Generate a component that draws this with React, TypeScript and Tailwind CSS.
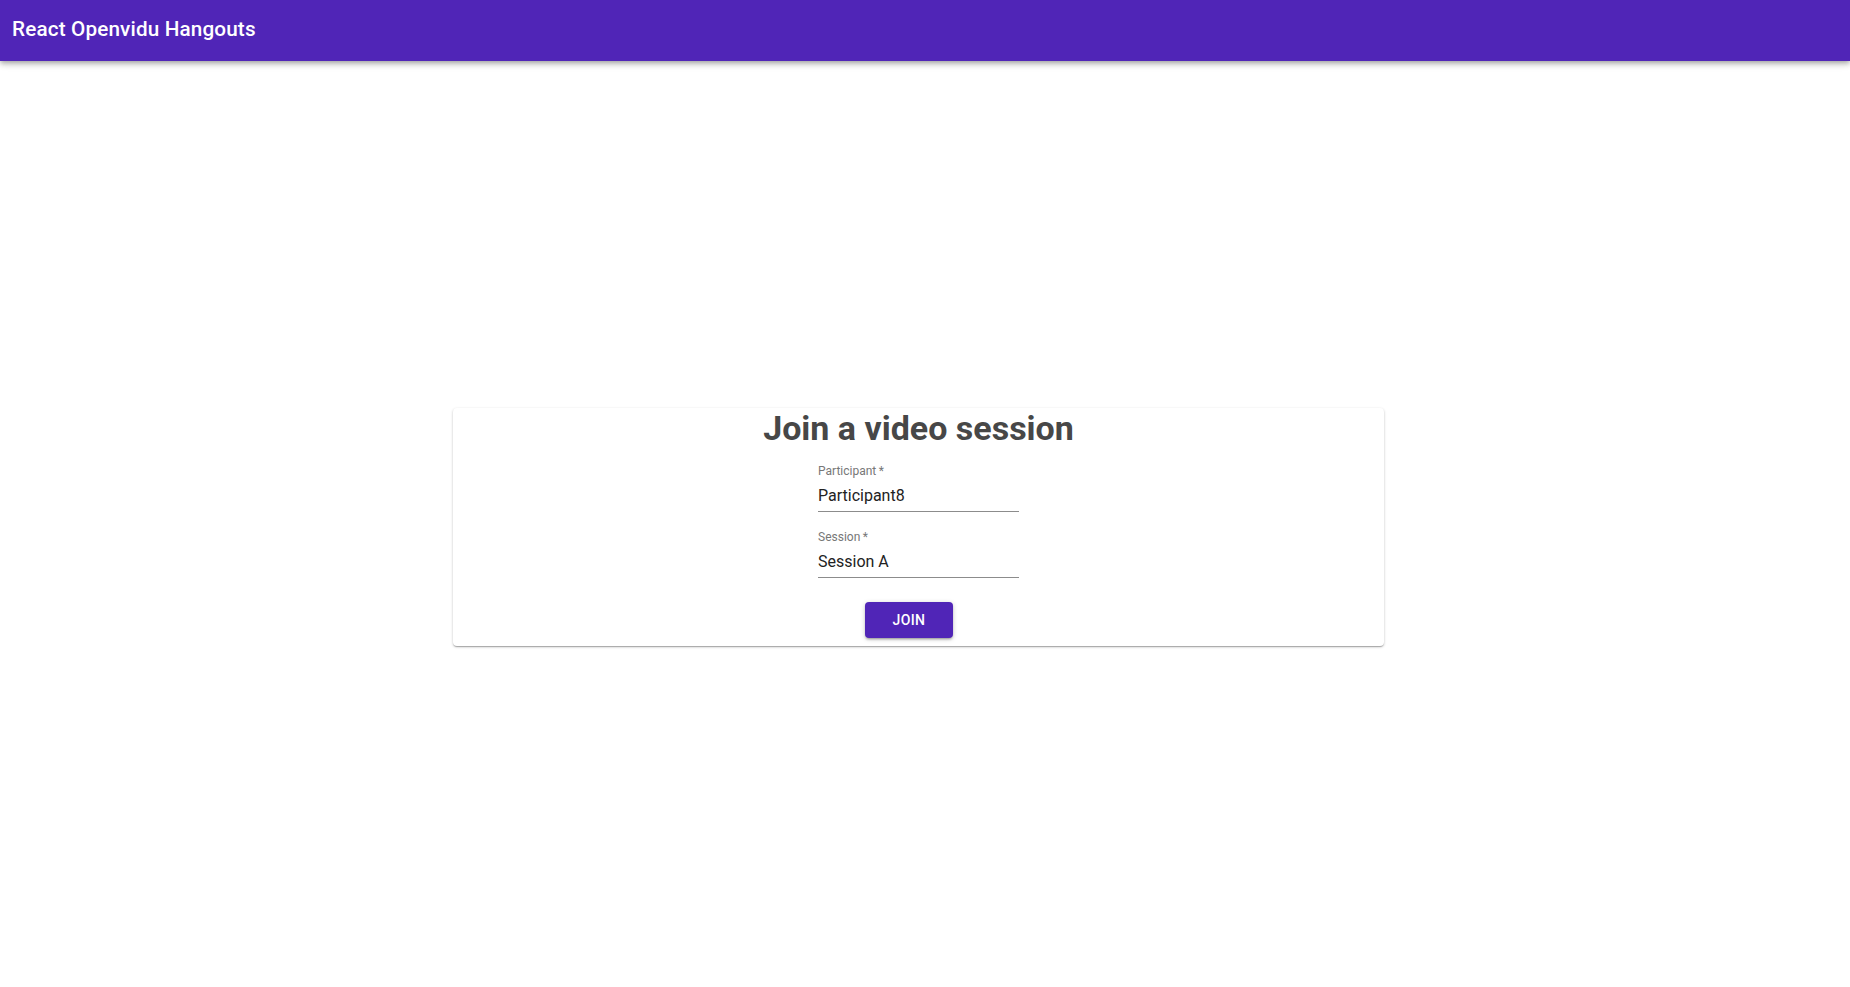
export default function App() {
  const font = { fontFamily: 'Roboto, "Liberation Sans", sans-serif' };
  return (
    <div className="min-h-[987px] bg-white" style={font}>
      <header className="h-[61px] bg-[#5025b7] flex items-start pt-[17px] px-[12px] shadow-[0_2px_4px_-1px_rgba(0,0,0,0.2),0_4px_5px_0_rgba(0,0,0,0.14),0_1px_10px_0_rgba(0,0,0,0.12)] relative z-10">
        <span className="text-white text-[20.7px] font-medium leading-[24px] tracking-[0.15px]">React Openvidu Hangouts</span>
      </header>
      <main className="pt-[347px] flex justify-center">
        <div className="w-[931px] h-[238px] mr-[13px] bg-white rounded-[4px] shadow-[0_1px_3px_0_rgba(0,0,0,0.2),0_1px_1px_0_rgba(0,0,0,0.14),0_2px_1px_-1px_rgba(0,0,0,0.12)] flex flex-col items-center">
          <h1 className="text-[34px] leading-[40px] font-bold text-[#474747]">Join a video session</h1>
          <div className="w-[201px] flex flex-col">
            <div className="mt-[16px]">
              <div className="text-[12px] leading-[14px] text-[#777]">Participant&thinsp;*</div>
              <div className="mt-[8px] text-[16px] leading-[19px] text-[#222] pb-[6px] border-b border-[#8c8c8c]">Participant8</div>
            </div>
            <div className="mt-[18px]">
              <div className="text-[12px] leading-[14px] text-[#777]">Session&thinsp;*</div>
              <div className="mt-[8px] text-[16px] leading-[19px] text-[#222] pb-[6px] border-b border-[#8c8c8c]">Session A</div>
            </div>
            <div className="mt-[24px] pl-[47px]">
              <button className="w-[88px] h-[36px] rounded-[4px] bg-[#5025b7] text-white text-[14px] font-medium uppercase tracking-[0.4px] shadow-[0_1px_5px_0_rgba(0,0,0,0.2),0_2px_2px_0_rgba(0,0,0,0.14),0_3px_1px_-2px_rgba(0,0,0,0.12)]">Join</button>
            </div>
          </div>
        </div>
      </main>
    </div>
  );
}
